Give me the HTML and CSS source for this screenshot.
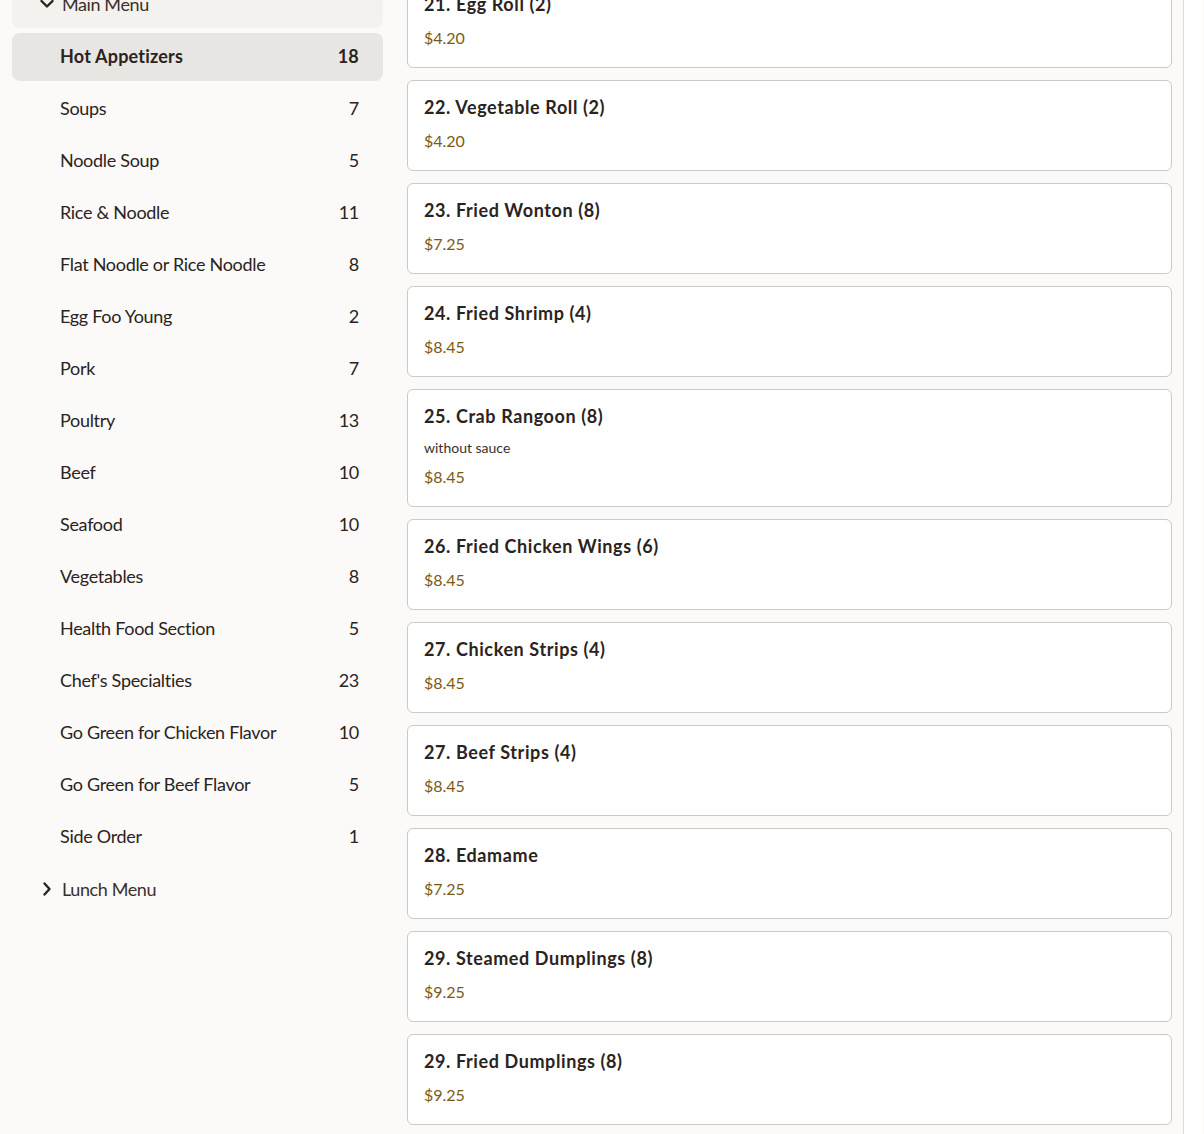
FILE: index.html
```html
<!DOCTYPE html>
<html lang="en">
<head>
<meta charset="utf-8">
<title>Menu</title>
<link rel="stylesheet" href="styles.css">
</head>
<body>
<div class="page">
  <aside class="sidebar">
    <div class="group-head open">
      <svg class="chev" width="16" height="16" viewBox="0 0 16 16"><path d="M2.5 5 L8 10.5 L13.5 5" fill="none" stroke="#2b2320" stroke-width="2.4" stroke-linecap="round" stroke-linejoin="round"/></svg>
      <span>Main Menu</span>
    </div>
    <ul class="cats">
      <li class="cat active"><span>Hot Appetizers</span><span>18</span></li>
      <li class="cat"><span>Soups</span><span>7</span></li>
      <li class="cat"><span>Noodle Soup</span><span>5</span></li>
      <li class="cat"><span>Rice &amp; Noodle</span><span>11</span></li>
      <li class="cat"><span>Flat Noodle or Rice Noodle</span><span>8</span></li>
      <li class="cat"><span>Egg Foo Young</span><span>2</span></li>
      <li class="cat"><span>Pork</span><span>7</span></li>
      <li class="cat"><span>Poultry</span><span>13</span></li>
      <li class="cat"><span>Beef</span><span>10</span></li>
      <li class="cat"><span>Seafood</span><span>10</span></li>
      <li class="cat"><span>Vegetables</span><span>8</span></li>
      <li class="cat"><span>Health Food Section</span><span>5</span></li>
      <li class="cat"><span>Chef's Specialties</span><span>23</span></li>
      <li class="cat"><span>Go Green for Chicken Flavor</span><span>10</span></li>
      <li class="cat"><span>Go Green for Beef Flavor</span><span>5</span></li>
      <li class="cat"><span>Side Order</span><span>1</span></li>
    </ul>
    <div class="group-head closed">
      <svg class="chev" width="16" height="16" viewBox="0 0 16 16"><path d="M5.5 2.5 L10.5 8 L5.5 13.5" fill="none" stroke="#2b2320" stroke-width="2.4" stroke-linecap="round" stroke-linejoin="round"/></svg>
      <span>Lunch Menu</span>
    </div>
  </aside>
  <main class="items">
    <div class="card"><div class="title">21. Egg Roll (2)</div><div class="price">$4.20</div></div>
    <div class="card"><div class="title">22. Vegetable Roll (2)</div><div class="price">$4.20</div></div>
    <div class="card"><div class="title">23. Fried Wonton (8)</div><div class="price">$7.25</div></div>
    <div class="card"><div class="title">24. Fried Shrimp (4)</div><div class="price">$8.45</div></div>
    <div class="card"><div class="title">25. Crab Rangoon (8)</div><div class="desc">without sauce</div><div class="price">$8.45</div></div>
    <div class="card"><div class="title">26. Fried Chicken Wings (6)</div><div class="price">$8.45</div></div>
    <div class="card"><div class="title">27. Chicken Strips (4)</div><div class="price">$8.45</div></div>
    <div class="card"><div class="title">27. Beef Strips (4)</div><div class="price">$8.45</div></div>
    <div class="card"><div class="title">28. Edamame</div><div class="price">$7.25</div></div>
    <div class="card"><div class="title">29. Steamed Dumplings (8)</div><div class="price">$9.25</div></div>
    <div class="card"><div class="title">29. Fried Dumplings (8)</div><div class="price">$9.25</div></div>
  </main>
  <div class="rail"></div>
</div>
</body>
</html>
```

FILE: styles.css
```css
* { box-sizing: border-box; }
html, body { margin: 0; padding: 0; }
body {
  background: #fbfaf8;
  font-family: "Lato", "Noto Sans", sans-serif;
  color: #2b2320;
  overflow: hidden;
}
.page {
  display: flex;
  align-items: flex-start;
  margin-top: -23px;
}
.sidebar {
  width: 371px;
  margin-left: 12px;
  margin-top: 3px;
  flex: none;
}
.group-head {
  display: flex;
  align-items: center;
  gap: 7px;
  height: 48px;
  padding-left: 27px;
  font-size: 18px;
  letter-spacing: -0.4px;
  color: #3a302c;
  border-radius: 8px;
}
.group-head.open {
  background: #f3f2ef;
}
.group-head .chev { flex: none; }
.cats {
  list-style: none;
  margin: 5px 0 4px;
  padding: 0;
}
.cat {
  display: flex;
  justify-content: space-between;
  align-items: center;
  height: 48px;
  margin-bottom: 4px;
  padding: 0 24px 2px 48px;
  font-size: 18px;
  letter-spacing: -0.3px;
  color: #2b2320;
  border-radius: 8px;
}
.cat.active {
  background: #e8e6e2;
  font-weight: 700;
  letter-spacing: 0.2px;
}
.items {
  width: 765px;
  margin-left: 24px;
  flex: none;
  display: flex;
  flex-direction: column;
  gap: 12px;
}
.card {
  background: #fff;
  border: 1px solid #cdc9c5;
  border-radius: 6px;
  padding: 14px 16px 17px;
}
.title {
  font-size: 18px;
  font-weight: 700;
  line-height: 24px;
  letter-spacing: 0.6px;
  color: #2b2320;
}
.desc {
  font-size: 14px;
  line-height: 20px;
  margin-top: 10px;
  color: #3a302c;
}
.desc + .price { margin-top: 7px; }
.price {
  font-size: 16px;
  line-height: 24px;
  margin-top: 10px;
  color: #7a5b16;
}
.rail {
  flex: none;
  width: 20px;
  margin-left: 11px;
  align-self: stretch;
  min-height: 1200px;
  border-left: 1px solid #dedad6;
  background: #ffffff;
}
```
